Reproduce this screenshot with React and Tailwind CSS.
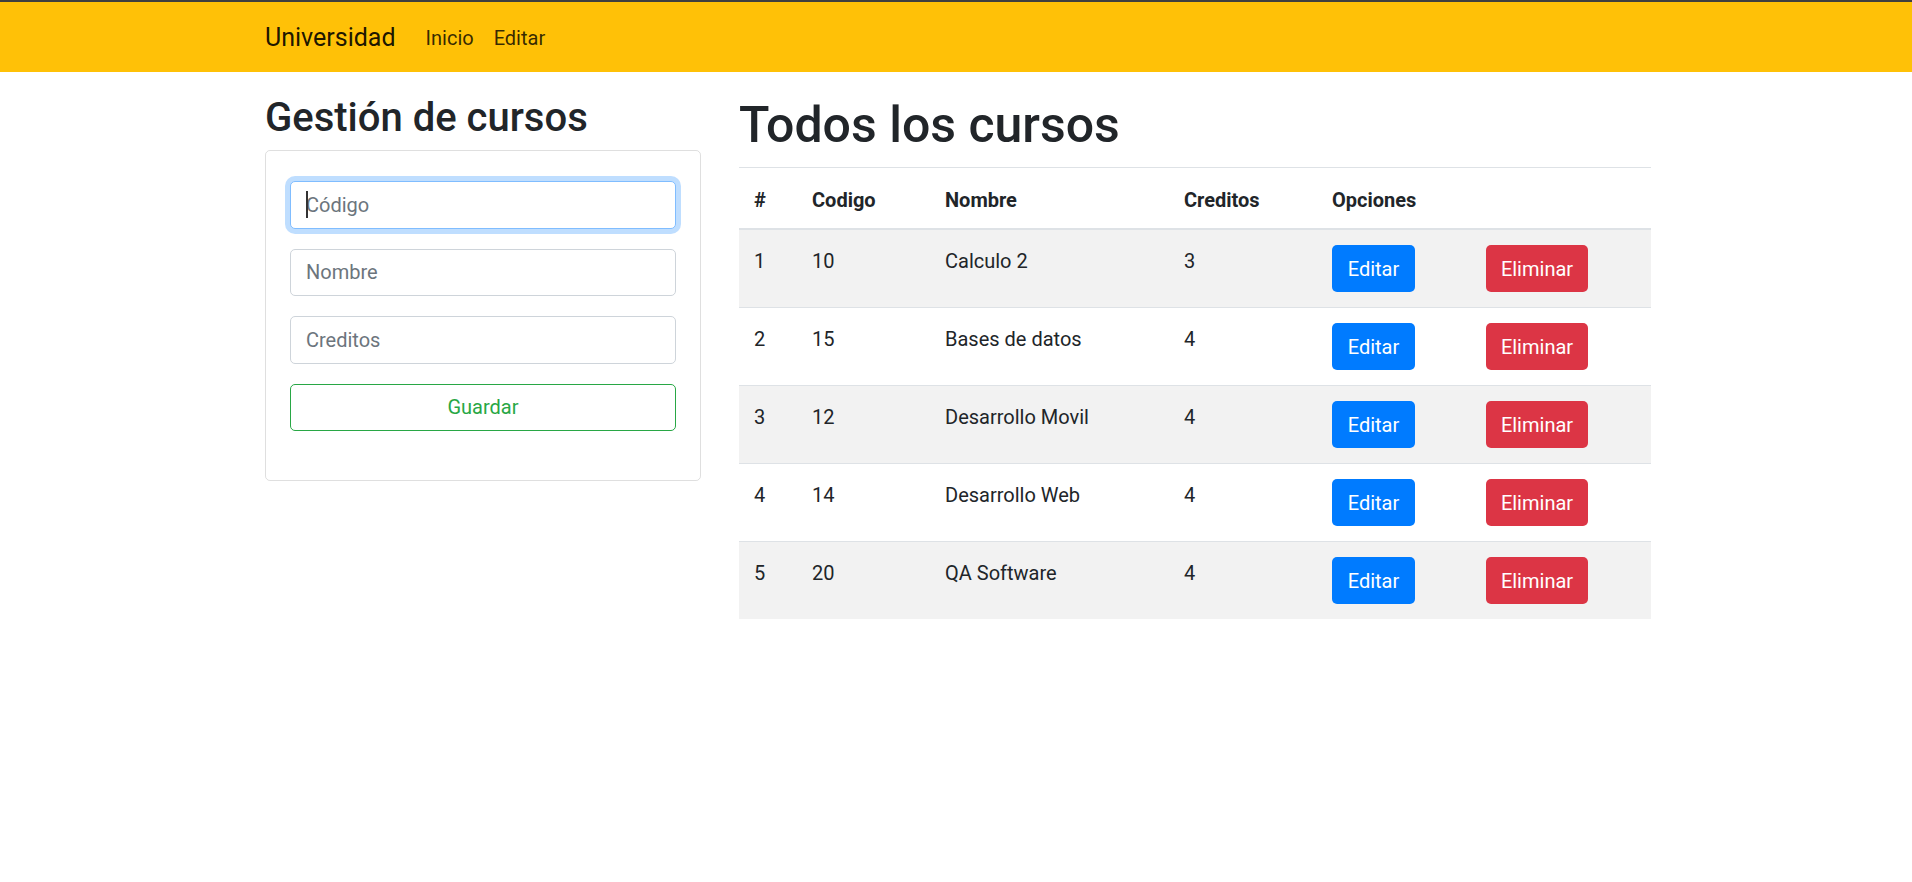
import React from "react";

const rows = [
  { n: 1, c: 10, name: "Calculo 2", cr: 3 },
  { n: 2, c: 15, name: "Bases de datos", cr: 4 },
  { n: 3, c: 12, name: "Desarrollo Movil", cr: 4 },
  { n: 4, c: 14, name: "Desarrollo Web", cr: 4 },
  { n: 5, c: 20, name: "QA Software", cr: 4 },
];

function Field({ placeholder, focused }) {
  return (
    <div className="relative">
      <input
        readOnly
        placeholder={placeholder}
        className={
          "block w-full h-[47.5px] rounded-[5px] px-[15px] text-[20px] leading-[30px] text-[#495057] placeholder:text-[#6c757d] outline-none bg-white " +
          (focused
            ? "border border-[#80bdff] shadow-[0_0_0_5px_rgba(0,123,255,0.25)]"
            : "border border-[#ced4da]")
        }
      />
      {focused && (
        <span className="absolute left-[16px] top-[10px] w-[2px] h-[27px] bg-[#333]" />
      )}
    </div>
  );
}

export default function App() {
  return (
    <div
      className="min-h-screen bg-white text-[#212529] text-[20px] leading-[30px]"
      style={{ fontFamily: "Roboto, 'Open Sans', sans-serif" }}
    >
      <nav className="border-t-2 border-[#3f3f3f] bg-[#ffc107] h-[72px]">
        <div className="ml-[265px] w-[1386px] h-[70px] flex items-center pt-[2px]">
          <span className="text-[25px] leading-[37.5px] text-black/90 mr-[20px]">
            Universidad
          </span>
          <span className="px-[10px] text-black/80">Inicio</span>
          <span className="px-[10px] text-black/80">Editar</span>
        </div>
      </nav>

      <main className="ml-[265px] w-[1386px] pt-[20px] flex">
        <section className="w-[436px] shrink-0">
          <h2 className="text-[40px] leading-[48px] font-medium mt-[2px] mb-[8px]">
            Gestión de cursos
          </h2>
          <div className="border border-black/[0.125] rounded-[5px] pt-[30px] px-[24px] pb-[49px]">
            <div className="flex flex-col gap-[20px]">
              <Field placeholder="Código" focused />
              <Field placeholder="Nombre" />
              <Field placeholder="Creditos" />
              <button className="h-[47.5px] w-full rounded-[5px] border border-[#28a745] text-[#28a745] text-[20px] leading-[30px]">
                Guardar
              </button>
            </div>
          </div>
        </section>

        <section className="ml-[38px] w-[912px]">
          <h1 className="text-[50px] leading-[60px] font-medium mt-[3px] mb-[12px]">
            Todos los cursos
          </h1>
          <table className="w-[912px] border-collapse table-fixed">
            <colgroup>
              <col className="w-[58px]" />
              <col className="w-[133px]" />
              <col className="w-[239px]" />
              <col className="w-[148px]" />
              <col className="w-[154px]" />
              <col className="w-[180px]" />
            </colgroup>
            <thead>
              <tr className="border-t border-[#dee2e6]">
                {["#", "Codigo", "Nombre", "Creditos", "Opciones", ""].map((h, i) => (
                  <th
                    key={i}
                    className="text-left font-bold px-[15px] pt-[17px] pb-[13px] align-bottom border-b-2 border-[#dee2e6]"
                  >
                    {h}
                  </th>
                ))}
              </tr>
            </thead>
            <tbody>
              {rows.map((r, i) => (
                <tr
                  key={r.n}
                  className={
                    (i % 2 === 0 ? "bg-[#f2f2f2] " : "bg-white ") +
                    (i === 0 ? "" : "border-t border-[#dee2e6]")
                  }
                >
                  <td className="px-[15px] pt-[16px] pb-[14px] align-top">{r.n}</td>
                  <td className="px-[15px] pt-[16px] pb-[14px] align-top">{r.c}</td>
                  <td className="px-[15px] pt-[16px] pb-[14px] align-top">{r.name}</td>
                  <td className="px-[15px] pt-[16px] pb-[14px] align-top">{r.cr}</td>
                  <td className="px-[15px] pt-[15px] pb-[15px] align-top">
                    <button className="block w-[83px] h-[47px] rounded-[5px] bg-[#007bff] text-white text-[20px] leading-[30px] text-center">
                      Editar
                    </button>
                  </td>
                  <td className="px-[15px] pt-[15px] pb-[15px] align-top">
                    <button className="block w-[102px] h-[47px] rounded-[5px] bg-[#dc3545] text-white text-[20px] leading-[30px] text-center">
                      Eliminar
                    </button>
                  </td>
                </tr>
              ))}
            </tbody>
          </table>
        </section>
      </main>
    </div>
  );
}
